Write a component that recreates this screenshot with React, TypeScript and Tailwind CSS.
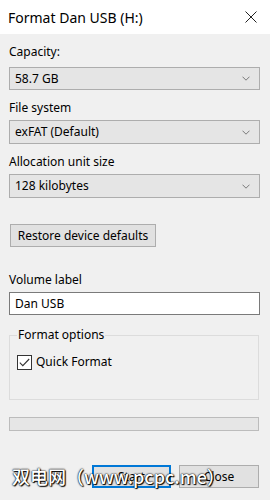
import React from "react";

const font = { fontFamily: '"Segoe UI", "Noto Sans", "Noto Sans CJK SC", sans-serif' };

const Chevron = () => (
  <svg width="8" height="5" viewBox="0 0 8 5" className="shrink-0">
    <path d="M0.5 0.7 L4 4.2 L7.5 0.7" fill="none" stroke="#7a7a7a" strokeWidth="1" />
  </svg>
);

const Select = ({ value, className }: { value: string; className?: string }) => (
  <div
    className={
      "flex items-center justify-between border border-[#adadad] bg-[#e5e5e5] pl-[5px] pr-[9px] text-[12px] text-black " +
      (className ?? "")
    }
  >
    <span>{value}</span>
    <Chevron />
  </div>
);

const Label = ({ children, className }: { children: React.ReactNode; className?: string }) => (
  <div className={"text-[12px] leading-4 text-black " + (className ?? "")}>{children}</div>
);

export default function App() {
  return (
    <div className="relative flex h-[500px] w-[270px] flex-col overflow-hidden bg-[#f0f0f0]" style={font}>
      <div className="flex h-[34px] shrink-0 items-center justify-between bg-white pl-[8px] pr-[13px]">
        <span className="text-[14px] text-black">Format Dan USB (H:)</span>
        <svg width="12" height="12" viewBox="0 0 12 12">
          <path d="M0.5 0.5 L11.5 11.5 M11.5 0.5 L0.5 11.5" stroke="#222" strokeWidth="1" />
        </svg>
      </div>

      <div className="flex flex-col pl-[9px] pr-[10px]">
        <Label className="mt-[10px]">Capacity:</Label>
        <Select value="58.7 GB" className="mt-[7px] h-[23px]" />

        <Label className="mt-[10px]">File system</Label>
        <Select value="exFAT (Default)" className="mt-[4px] h-[24px]" />

        <Label className="mt-[10px]">Allocation unit size</Label>
        <Select value="128 kilobytes" className="mt-[4px] h-[24px]" />

        <button className="ml-px mt-[26px] h-[23px] w-[146px] border border-[#adadad] bg-[#e1e1e1] text-[12px] text-black">
          Restore device defaults
        </button>

        <Label className="mt-[25px]">Volume label</Label>
        <div className="mt-[4px] flex h-[23px] items-center border border-[#7a7a7a] bg-white pl-[5px] text-[12px] text-black">
          Dan USB
        </div>

        <fieldset className="mr-px mt-[12px] h-[73px] border border-[#dcdcdc] px-[7px]">
          <legend className="px-[1px] text-[12px] leading-4 text-black">Format options</legend>
          <label className="mt-[10px] flex items-center gap-[4px] text-[12px] text-black">
            <span className="flex h-[15px] w-[15px] items-center justify-center border border-[#333] bg-white">
              <svg width="11" height="9" viewBox="0 0 11 9">
                <path d="M0.8 4.6 L3.8 7.6 L10.2 1" fill="none" stroke="#333" strokeWidth="1.1" />
              </svg>
            </span>
            Quick Format
          </label>
        </fieldset>

        <div className="mr-px mt-[17px] h-[14px] border border-[#bcbcbc] bg-[#e6e6e6]" />

        <div className="mt-[34px] flex justify-end gap-[8px] pr-px">
          <button className="h-[23px] w-[79px] border border-[#0078d7] bg-[#e1e1e1] text-[12px] text-black outline outline-1 -outline-offset-2 outline-[#0078d7]">
            Start
          </button>
          <button className="h-[23px] w-[80px] border border-[#adadad] bg-[#e1e1e1] text-[12px] text-black">
            Close
          </button>
        </div>
      </div>

      <div
        className="pointer-events-none absolute left-[12px] top-[464px] text-[18px] font-medium leading-6 text-white [text-shadow:0_0_2px_#000,0_0_1px_#000,1px_1px_1px_#000]"
        style={{ fontFamily: '"Noto Sans CJK SC", sans-serif' }}
      >
        双电网（www.pcpc.me）
      </div>
    </div>
  );
}
